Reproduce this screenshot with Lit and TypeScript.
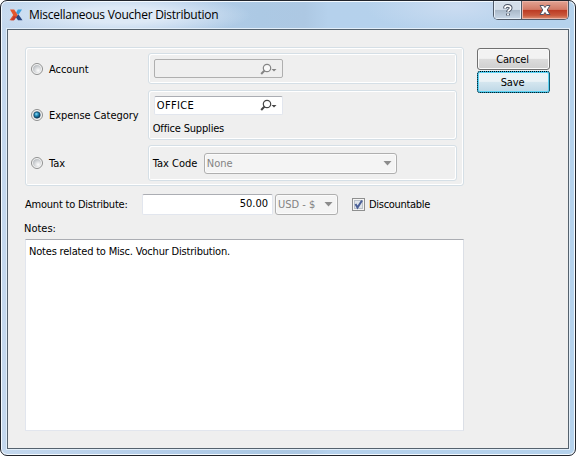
import { LitElement, html, css, svg } from "lit";
import { customElement, property } from "lit/decorators.js";

const glass = (color: string) => html`<svg class="glass" width="17" height="13" viewBox="0 0 17 13">
  <circle cx="7" cy="5" r="3.7" fill="#fff" fill-opacity=".6" stroke=${color} stroke-width="1.2"></circle>
  <path d="M4.400 7.600 L1.200 11" stroke=${color} stroke-width="2.100"></path>
  <path d="M11.500 6h5l-2.500 2.600z" fill=${color}></path>
</svg>`;

@customElement("radio-dot")
export class RadioDot extends LitElement {
  @property({ type: Boolean }) checked = false;
  static styles = css`
    :host { display: block; width: 12px; height: 12px; }
    svg { display: block; }
  `;
  render() {
    return html`<svg width="12" height="12" viewBox="0 0 12 12">
      <defs>
        <radialGradient id="a" cx=".65" cy=".7" r=".7"><stop offset="0" stop-color="#fdfdfd"></stop><stop offset="1" stop-color="#bcc0c4"></stop></radialGradient>
        <radialGradient id="b" cx=".4" cy=".35" r=".7"><stop offset="0" stop-color="#8fdcf6"></stop><stop offset=".45" stop-color="#1d86b4"></stop><stop offset="1" stop-color="#0b2c48"></stop></radialGradient>
      </defs>
      <circle cx="6" cy="6" r="5.5" fill="#f6f6f6" stroke="#8e8f8f"></circle>
      <circle cx="6" cy="6" r="4" fill="url(#a)"></circle>
      ${this.checked ? svg`<circle cx="6" cy="6" r="3.2" fill="url(#b)" stroke="#123a5a" stroke-width=".6"></circle>` : ""}
    </svg>`;
  }
}

@customElement("app-root")
export class AppRoot extends LitElement {
  static styles = css`
    * { box-sizing: border-box; }
    :host {
      display: block; width: 576px; height: 456px; background: #fff;
      font: 11px "DejaVu Sans Condensed", "DejaVu Sans", sans-serif; font-stretch: condensed; color: #000;
    }
    svg { display: block; }
    .window {
      width: 576px; height: 456px; display: flex; flex-direction: column; padding: 0 6px 6px;
      border: 1px solid #20242c; border-radius: 7px; box-shadow: inset 0 0 0 1px #f4faff;
      background:
        radial-gradient(ellipse 130px 22px at 120px 14px, #dde9f6 0, #dde9f6 35%, #dde9f600 100%),
        radial-gradient(ellipse 90px 26px at 455px 6px, #cbdcf1 0, #cbdcf100 100%),
        linear-gradient(90deg, #c4d8ee 0, #b3cde9 30%, #acc9e4 45%, #adc8e3 53%, #b5d1ec 57%, #b5d2ec 100%);
    }
    .bar { height: 28px; display: flex; flex: none; }
    .logo { margin: 7px 0 0 2px; }
    .title { font: 12px "Open Sans", sans-serif; line-height: 28px; letter-spacing: -.26px; margin-left: 6px; white-space: nowrap; }
    .caption { display: flex; margin-left: auto; height: 19px; border: 1px solid #505a68; border-top: 0; border-radius: 0 0 5px 5px; overflow: hidden; width: 76px; }
    .help { width: 28px; padding: 3px 0 0 9px; border-right: 1px solid #505a68; box-shadow: inset 0 0 0 1px #e6eff8; background: linear-gradient(#d4dee9 0 47%, #a9b8c8 50%, #c9d8e8); }
    .close { flex: 1; padding: 3px 0 0 17px; box-shadow: inset 0 0 0 1px #eab5a8; background: linear-gradient(#e2a393, #d27a66 47%, #bb3a22 50%, #c9583c 80%, #dd9477); }
    .client { flex: 1; border: 1px solid #55626e; outline: 1px solid #e2eef9; background: #efefef; display: flex; padding: 17px 18px 0 17px; }
    .main { width: 439px; margin-right: 13px; }
    .group { border: 1px solid #d5dfe6; border-radius: 3px; box-shadow: inset 1px 1px #fff, inset -1px -1px #fff; }
    .outer { height: 139px; padding: 5px 6px 4px 5px; display: flex; flex-direction: column; justify-content: space-between; }
    .row { display: flex; align-items: center; }
    .label { width: 99px; margin-left: 6px; white-space: nowrap; letter-spacing: -.05px; }
    .cell { width: 310px; padding: 5px; }
    .field { height: 21px; background: #fff; border: 1px solid #e2e6ee; border-top-color: #abadb3; border-radius: 2px; display: flex; align-items: center; padding: 0 4px 0 3px; white-space: nowrap; }
    .pick { width: 129px; height: 19px; padding: 1px 5px 0 2px; letter-spacing: .35px; }
    .off { background: #efefef; border-color: #afafaf; }
    .glass { margin-left: auto; }
    .combo { height: 21px; border: 1px solid #afafaf; border-radius: 3px; background: #f4f4f4; box-shadow: inset 0 0 0 1px #fbfbfb; color: #838383; display: flex; align-items: center; padding: 0 4px 0 2px; white-space: nowrap; }
    .arrow { margin-left: auto; }
    .a { height: 31px; } .b { height: 50px; } .c { height: 36px; display: flex; align-items: center; }
    .supplies { margin: 7px 0 0 -1px; white-space: nowrap; letter-spacing: -.18px; }
    .code { width: 51px; margin-left: -1px; white-space: nowrap; }
    .amount { height: 21px; margin-top: 8px; display: flex; align-items: center; }
    .amount-label { width: 117px; white-space: nowrap; letter-spacing: -.22px; }
    .money { width: 131px; justify-content: flex-end; margin-right: 2px; padding: 0 4px 2px 0; }
    .check { margin: 0 4px 0 14px; }
    .dc { letter-spacing: -.3px; }
    .notes-label { margin-top: 7px; height: 14px; line-height: 14px; margin-left: -1px; }
    .notes { margin-top: 3px; height: 192px; background: #fff; border: 1px solid #e2e6ee; border-top-color: #abadb3; border-right-color: #dbdfe6; padding: 5px 3px; letter-spacing: -.19px; }
    .buttons { width: 73px; display: flex; flex-direction: column; gap: 1px; margin-top: 1px; }
    .btn { font: inherit; height: 22px; padding: 0 2px 0 0; border: 1px solid #707070; border-radius: 3px; box-shadow: inset 0 0 0 1px #fafafa; color: #000; background: linear-gradient(#f2f2f2 0 47%, #dcdcdc 50%, #cfcfcf); letter-spacing: -.15px; }
    .save { border-color: #22b5e4; box-shadow: inset 0 0 0 1px #5fd2f2; outline: 1px dotted #000; outline-offset: -1px; background: linear-gradient(#eaf2f6 0 47%, #d5e6ef 50%, #bdd7e6); }
    .mid { position: relative; top: 1px; }
  `;
  render() {
    const tri = html`<svg class="arrow" width="9" height="5" viewBox="0 0 9 5"><path d="M.5 0h8L4.5 4.5z" fill="#8c8c8c"></path></svg>`;
    return html`<div class="window">
      <div class="bar">
        <svg class="logo" width="14" height="14" viewBox="0 0 14 14">
          <path d="M8.800 1.500H13L9.500 6.800 7 5z" fill="#3da0dc"></path>
          <path d="M9.500 6.500L13.500 12.300H9L6.500 8.800z" fill="#28457f"></path>
          <path d="M1 1.500h4.200L8.800 7 5 12.300H.5L4.200 7z" fill="#e2562d"></path>
          <path d="M4.800 8l2.800.7L5 12.300H2z" fill="#c23a2c"></path>
        </svg>
        <div class="title">Miscellaneous Voucher Distribution</div>
        <div class="caption">
          <div class="help"><svg width="10" height="13" viewBox="0 0 10 13"><path d="M2 4.500C2 1.200 7.700 1.200 7.700 4c0 2-2.700 2-2.700 4M5 9.500v2" fill="none" stroke="#4a5364" stroke-width="3.700"></path><path d="M2 4.200C2 1.200 7.700 1.200 7.700 4c0 2-2.700 2-2.700 3.800M5 9.500v1.700" fill="none" stroke="#fff" stroke-width="1.800"></path></svg></div>
          <div class="close"><svg width="12" height="12" viewBox="0 0 12 12"><path d="M1 1.500h3.500L6 3.500l1.500-2H11L8.200 6l2.800 4.500H7.500L6 8.500l-1.500 2H1L3.800 6z" fill="#fff" stroke="#535666"></path></svg></div>
        </div>
      </div>
      <div class="client">
        <div class="main">
          <div class="group outer">
            <div class="row"><radio-dot></radio-dot><span class="label mid">Account</span>
              <div class="group cell a"><div class="field pick off">${glass("#858585")}</div></div></div>
            <div class="row"><radio-dot checked></radio-dot><span class="label mid">Expense Category</span>
              <div class="group cell b"><div class="field pick">OFFICE${glass("#454545")}</div><div class="supplies">Office Supplies</div></div></div>
            <div class="row"><radio-dot></radio-dot><span class="label">Tax</span>
              <div class="group cell c"><span class="code">Tax Code</span><div class="combo" style="width:193px">None${tri}</div></div></div>
          </div>
          <div class="amount"><span class="amount-label">Amount to Distribute:</span>
            <div class="field money">50.00</div><div class="combo" style="width:63px">USD - $${tri}</div>
            <svg class="check" width="13" height="13" viewBox="0 0 13 13"><rect x=".5" y=".5" width="12" height="12" fill="#f4f4f4" stroke="#8e8f8f"></rect><rect x="2.500" y="2.500" width="8" height="8" fill="#dfe4ea" stroke="#b9c0c8"></rect><path d="M3.500 6l2 3.500L10 2.500" fill="none" stroke="#4a5f97" stroke-width="2"></path></svg>
            <span class="dc">Discountable</span></div>
          <div class="notes-label">Notes:</div>
          <div class="notes">Notes related to Misc. Vochur Distribution.</div>
        </div>
        <div class="buttons"><button class="btn">Cancel</button><button class="btn save">Save</button></div>
      </div>
    </div>`;
  }
}
